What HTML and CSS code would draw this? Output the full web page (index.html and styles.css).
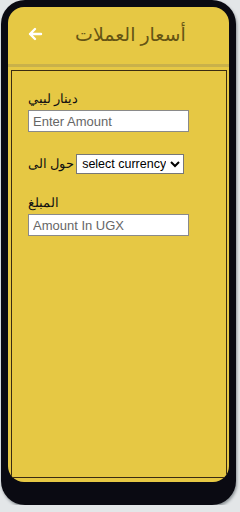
FILE: index.html
```html
<!DOCTYPE html>
<html lang="ar">
<head>
    <meta charset="UTF-8">
    <meta name="viewport" content="width=device-width, initial-scale=1.0">
    <title>أسعار العملات</title>
    <link rel="stylesheet" href="styles.css">
</head>
<body>
    <div class="phone">
        <div class="screen">
            <div class="header">
                <svg class="back" width="16" height="16" viewBox="0 0 16 16">
                    <path d="M14 8H3M8 3L3 8l5 5" fill="none" stroke="#fff" stroke-width="2.4" stroke-linecap="round" stroke-linejoin="round"/>
                </svg>
                <h1 class="title">أسعار العملات</h1>
            </div>
            <div class="content">
                <label class="label" for="amount">دينار ليبي</label>
                <input class="field" type="text" id="amount" placeholder="Enter Amount">

                <div class="convert">
                    <label class="label" for="currency">حول الى</label>
                    <select class="picker" id="currency">
                        <option>select currency</option>
                    </select>
                </div>

                <label class="label" for="result">المبلغ</label>
                <input class="field" type="text" id="result" placeholder="Amount In UGX">
            </div>
        </div>
    </div>
</body>
</html>
```

FILE: styles.css
```css
body {
    margin: 0;
    background-color: #e3e6e8;
    font-family: "Liberation Sans", Arial, sans-serif;
}
.phone {
    width: 221px;
    height: 475px;
    margin: 0 4px 0 1px;
    padding: 7px 7px 23px 7px;
    background-color: #0a0a12;
    border-radius: 24px;
    box-shadow: 1px 2px 3px #8c9296;
}
.screen {
    height: 475px;
    background-color: #e6c844;
    border-radius: 16px;
    overflow: hidden;
    display: flex;
    flex-direction: column;
}
.header {
    height: 57px;
    flex-shrink: 0;
    display: flex;
    align-items: center;
    padding-left: 19px;
    border-bottom: 3px solid #c9b14a;
}
.back {
    margin-top: -4px;
}
.title {
    margin: 0 0 4px 32px;
    font-family: "Noto Sans", "DejaVu Sans", sans-serif;
    font-size: 19px;
    font-weight: 500;
    color: #655414;
}
.content {
    margin: 3px 2px 4px 3px;
    flex: 1;
    border: 1px solid #3a2c12;
    padding: 21px 16px;
    display: flex;
    flex-direction: column;
    align-items: flex-start;
}
.label {
    font-family: "Liberation Serif", "DejaVu Serif", serif;
    font-size: 12.5px;
    color: #111;
    line-height: 14px;
}
.field {
    margin: 4px 0 22px 0;
    width: 161px;
    height: 22px;
    box-sizing: border-box;
    padding: 1px 4px;
    border: 1px solid #8a8a8a;
    background-color: #fff;
    font-family: "Liberation Sans", Arial, sans-serif;
    font-size: 13px;
}
.field::placeholder {
    color: #666;
}
.convert {
    display: flex;
    align-items: center;
    gap: 2px;
    margin-bottom: 22px;
}
.picker {
    width: 108px;
    height: 20px;
    padding: 0 1px;
    font-family: "Liberation Sans", Arial, sans-serif;
    font-size: 12.5px;
    border: 1px solid #777;
    background-color: #fff;
    color: #000;
}
```
